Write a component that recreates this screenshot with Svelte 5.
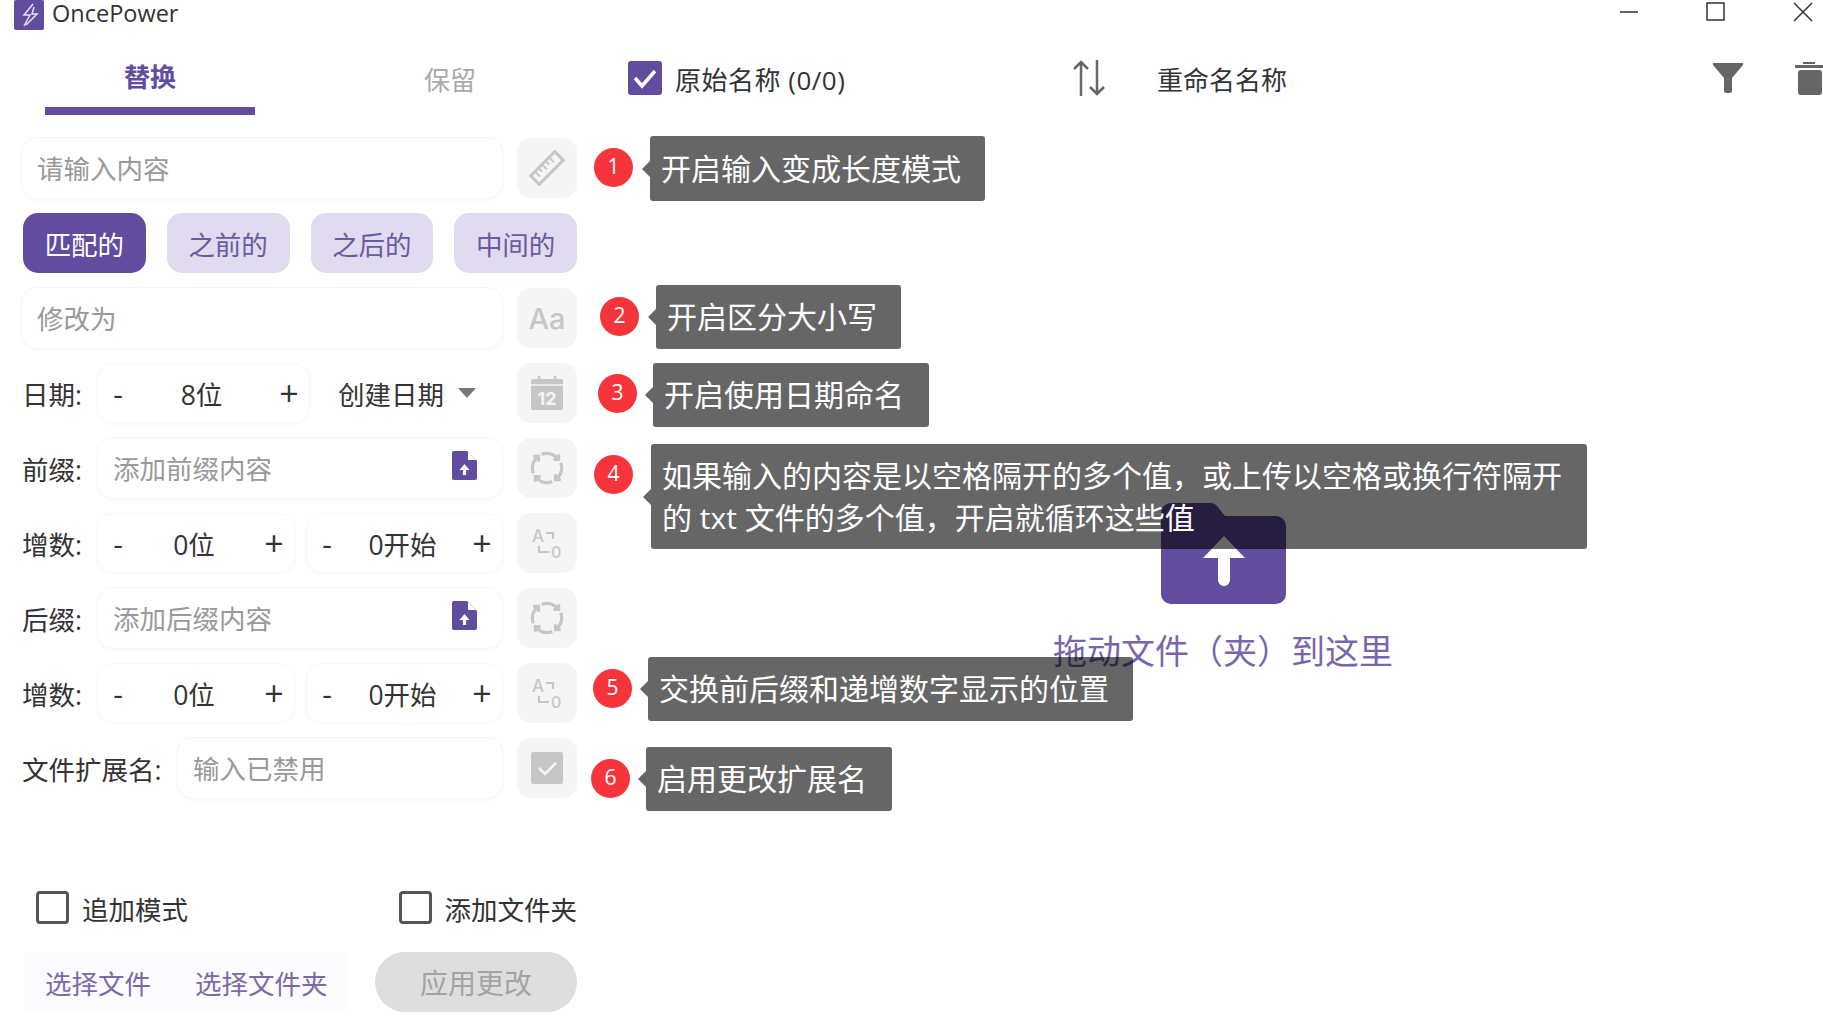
<script>
  const modes = ['匹配的', '之前的', '之后的', '中间的'];

  // annotation callouts laid over the screenshot
  const notes = [
    { n: 1, cx: 594, cy: 148, x: 650, y: 136, w: 335, h: 65, text: '开启输入变成长度模式' },
    { n: 2, cx: 600, cy: 297, x: 656, y: 285, w: 245, h: 64, text: '开启区分大小写' },
    { n: 3, cx: 598, cy: 374, x: 653, y: 363, w: 276, h: 64, text: '开启使用日期命名' },
    { n: 4, cx: 594, cy: 455, x: 651, y: 444, w: 936, h: 105, text: '如果输入的内容是以空格隔开的多个值，或上传以空格或换行符隔开的 txt 文件的多个值，开启就循环这些值' },
    { n: 5, cx: 593, cy: 669, x: 648, y: 657, w: 485, h: 64, text: '交换前后缀和递增数字显示的位置' },
    { n: 6, cx: 591, cy: 759, x: 646, y: 747, w: 246, h: 64, text: '启用更改扩展名' }
  ];
</script>

{#snippet stepper(value, cls)}
  <div class="stepper {cls}">
    <span class="step">-</span>
    <span class="value">{value}</span>
    <span class="step plus">+</span>
  </div>
{/snippet}

{#snippet loopIcon()}
  <svg width="36" height="36" viewBox="0 0 34 34" fill="none" stroke="#c6c6c6" stroke-width="3">
    <path d="M12 4C18 2 24 4 28 9M28 4v5h-5" />
    <path d="M30 12C32 18 30 24 25 28M30 28h-5v-5" />
    <path d="M22 30C16 32 10 30 6 25M6 30v-5h5" />
    <path d="M4 22C2 16 4 10 9 6M4 6h5v5" />
  </svg>
{/snippet}

{#snippet swapIcon()}
  <svg width="34" height="34" viewBox="0 0 34 34" fill="none" stroke="#c6c6c6" stroke-width="2.200">
    <text x="2" y="16" class="swap-a">A</text>
    <path d="M16 7h7v6" />
    <path d="M9 20v6h10" />
    <text x="21" y="32" class="swap-0">0</text>
  </svg>
{/snippet}

{#snippet fileIcon()}
  <svg class="file-icon" width="25" height="29" viewBox="0 0 25 29">
    <path d="M2 0h13l10 10v17a2 2 0 0 1-2 2H2a2 2 0 0 1-2-2V2a2 2 0 0 1 2-2z" fill="#614c9f" />
    <path d="M16 1l8 8h-8z" fill="#fff" />
    <path d="M12.500 13l5 6h-3.400v5h-3.200v-5H7.500z" fill="#fff" />
  </svg>
{/snippet}

<div class="window">
  <header class="titlebar">
    <div class="logo">
      <svg width="30" height="30" viewBox="0 0 30 30">
        <rect width="30" height="30" rx="2" fill="#614c9f" />
        <path d="M19 4L10 15h6l-6 11M20 7l-2 7h5L12 25" fill="none" stroke="#e6e0f5" stroke-width="1.500" />
      </svg>
    </div>
    <span class="app-name">OncePower</span>
    <div class="win-controls">
      <svg width="20" height="20" viewBox="0 0 20 20"><path d="M1 10h18" stroke="#333" stroke-width="1.500" /></svg>
      <svg width="20" height="20" viewBox="0 0 20 20"><rect x="1" y="1" width="17" height="17" fill="none" stroke="#333" stroke-width="1.500" /></svg>
      <svg width="20" height="20" viewBox="0 0 20 20"><path d="M1 1l18 18M19 1L1 19" stroke="#333" stroke-width="1.500" /></svg>
    </div>
  </header>

  <div class="body">
    <aside class="left">
      <nav class="tabs">
        <div class="tab active">替换</div>
        <div class="tab">保留</div>
      </nav>

      <div class="rows">
        <div class="row">
          <input class="field grow" placeholder="请输入内容" />
          <div class="icon-btn">
            <svg width="40" height="40" viewBox="0 0 40 40" fill="none" stroke="#c6c6c6" stroke-width="3">
              <g transform="rotate(-45 20 20)">
                <rect x="3" y="14" width="34" height="12" />
                <path d="M9 15v6M14 15v4M19 15v6M24 15v4M29 15v6" stroke-width="2" />
              </g>
            </svg>
          </div>
        </div>

        <div class="row modes">
          {#each modes as mode, i}
            <button class="mode" class:on={i === 0}>{mode}</button>
          {/each}
        </div>

        <div class="row">
          <input class="field grow" placeholder="修改为" />
          <div class="icon-btn"><span class="aa">Aa</span></div>
        </div>

        <div class="row">
          <span class="label">日期:</span>
          {@render stepper('8位', 'wide')}
          <div class="select">创建日期<span class="caret"></span></div>
          <div class="icon-btn">
            <svg width="32" height="34" viewBox="0 0 32 34">
              <path d="M8 0v6M24 0v6" stroke="#c6c6c6" stroke-width="2.500" />
              <rect y="3" width="32" height="31" rx="2" fill="#c6c6c6" />
              <path d="M0 9h32" stroke="#f5f5f5" stroke-width="1.500" />
              <text x="16" y="29" class="cal-text">12</text>
            </svg>
          </div>
        </div>

        <div class="row">
          <span class="label">前缀:</span>
          <div class="field grow with-icon">
            <input placeholder="添加前缀内容" />
            {@render fileIcon()}
          </div>
          <div class="icon-btn">{@render loopIcon()}</div>
        </div>

        <div class="row">
          <span class="label">增数:</span>
          {@render stepper('0位', 'half')}
          {@render stepper('0开始', 'half')}
          <div class="icon-btn">{@render swapIcon()}</div>
        </div>

        <div class="row">
          <span class="label">后缀:</span>
          <div class="field grow with-icon">
            <input placeholder="添加后缀内容" />
            {@render fileIcon()}
          </div>
          <div class="icon-btn">{@render loopIcon()}</div>
        </div>

        <div class="row">
          <span class="label">增数:</span>
          {@render stepper('0位', 'half')}
          {@render stepper('0开始', 'half')}
          <div class="icon-btn">{@render swapIcon()}</div>
        </div>

        <div class="row">
          <span class="label ext">文件扩展名:</span>
          <input class="field grow" placeholder="输入已禁用" />
          <div class="icon-btn">
            <svg width="32" height="32" viewBox="0 0 32 32">
              <rect width="32" height="32" rx="2" fill="#c6c6c6" />
              <path d="M8 16l6 6 11-11" fill="none" stroke="#f5f5f5" stroke-width="2.500" />
            </svg>
          </div>
        </div>
      </div>

      <div class="checks">
        <label class="check first"><span class="box"></span><span class="check-text">追加模式</span></label>
        <label class="check"><span class="box"></span><span class="check-text">添加文件夹</span></label>
      </div>

      <div class="actions">
        <div class="pickers">
          <span>选择文件</span>
          <span>选择文件夹</span>
        </div>
        <button class="apply">应用更改</button>
      </div>
    </aside>

    <main class="right">
      <div class="list-head">
        <span class="head-check">
          <svg width="34" height="34" viewBox="0 0 34 34">
            <rect width="34" height="34" rx="3" fill="#614c9f" />
            <path d="M7 17l7 8 13-15" fill="none" stroke="#fff" stroke-width="3.500" />
          </svg>
        </span>
        <span class="orig">原始名称 (0/0)</span>
        <svg class="sort" width="36" height="36" viewBox="0 0 36 36" fill="none" stroke="#666" stroke-width="2.500">
          <path d="M10 36V2M3 9l7-7 7 7" />
          <path d="M26 0v34M19 27l7 7 7-7" />
        </svg>
        <span class="renamed">重命名名称</span>
        <svg class="filter" width="30" height="30" viewBox="0 0 30 30">
          <path d="M1 0h28a1 1 0 0 1 1 2L19 15v13a2 2 0 0 1-2 2h-4a2 2 0 0 1-2-2V15L0 2a1 1 0 0 1 1-2z" fill="#666" />
        </svg>
        <svg class="trash" width="28" height="34" viewBox="0 0 28 34">
          <path d="M0 4h28v3H0zM8 1h12v2H8z" fill="#666" />
          <rect x="3" y="9" width="24" height="25" rx="3" fill="#666" />
        </svg>
      </div>

      <div class="drop">
        <svg width="125" height="101" viewBox="0 0 125 101">
          <path d="M10 0h40a8 8 0 0 1 6 3l8 10h51a10 10 0 0 1 10 10v68a10 10 0 0 1-10 10H10a10 10 0 0 1-10-10V10A10 10 0 0 1 10 0z" fill="#614c9f" />
          <path d="M63 33l21 22H69v22a6 6 0 0 1-12 0V55H42z" fill="#fff" />
        </svg>
        <p>拖动文件（夹）到这里</p>
      </div>
    </main>
  </div>

  {#each notes as note}
    <div class="badge" style="left:{note.cx}px;top:{note.cy}px">{note.n}</div>
    <div class="tip" style="left:{note.x}px;top:{note.y}px;width:{note.w}px;height:{note.h}px">{note.text}</div>
  {/each}
</div>

<style>
  :global(body) {
    margin: 0;
    background: #fff;
    overflow: hidden;
  }
  .window {
    position: relative;
    width: 1823px;
    height: 1025px;
    overflow: hidden;
    background: #fff;
    color: #333;
    font-family: "Open Sans", "Noto Sans CJK SC", sans-serif;
    font-size: 26.5px;
  }
  .titlebar {
    display: flex;
    align-items: flex-start;
    height: 30px;
    padding-left: 14px;
  }
  .logo {
    display: flex;
    width: 30px;
    height: 30px;
  }
  .app-name {
    margin-left: 8px;
    font-size: 23.5px;
    line-height: 27px;
  }
  .win-controls {
    margin-left: auto;
    display: flex;
    gap: 67px;
    padding-right: 10px;
    margin-top: 2px;
  }
  .body {
    display: flex;
  }

  .left {
    width: 556px;
    margin-left: 21px;
    flex-shrink: 0;
  }
  .tabs {
    display: flex;
    gap: 90px;
    height: 85px;
    padding-left: 24px;
    margin-bottom: 23px;
    align-items: flex-end;
  }
  .tab {
    width: 210px;
    height: 58px;
    line-height: 46px;
    text-align: center;
    font-size: 26px;
    color: #aaa;
  }
  .tab.active {
    line-height: 40px;
    color: #614c9f;
    font-weight: 700;
    border-bottom: 8px solid #614c9f;
    box-sizing: border-box;
  }

  .rows {
    display: flex;
    flex-direction: column;
    gap: 15px;
  }
  .row {
    display: flex;
    align-items: center;
    height: 60px;
  }
  .label {
    width: 76px;
    flex-shrink: 0;
    padding-left: 1px;
    box-sizing: border-box;
    white-space: nowrap;
  }
  .label.ext {
    width: 156px;
  }
  .field {
    box-sizing: border-box;
    height: 62px;
    border: 1px solid #f6f6f6;
    border-radius: 16px;
    box-shadow: 0 2px 5px rgba(0, 0, 0, 0.025);
    background: #fff;
    font: inherit;
    padding: 2px 14px 0 15px;
    outline: none;
    min-width: 0;
  }
  .field.grow {
    flex: 1;
    margin-right: 14px;
  }
  input::placeholder {
    color: #999;
    opacity: 1;
  }
  .with-icon {
    display: flex;
    align-items: center;
  }
  .with-icon input {
    flex: 1;
    min-width: 0;
    border: 0;
    outline: none;
    font: inherit;
    padding: 0;
    background: none;
  }
  .file-icon {
    margin-right: 11px;
    margin-top: -8px;
    flex-shrink: 0;
  }
  .icon-btn {
    display: flex;
    align-items: center;
    justify-content: center;
    width: 60px;
    height: 60px;
    flex-shrink: 0;
    border-radius: 14px;
    background: #f5f5f5;
  }
  .aa {
    color: #c6c6c6;
    font-size: 29px;
    font-family: "Inter", sans-serif;
    font-weight: 500;
  }
  .swap-a,
  .swap-0 {
    font-family: "Inter", sans-serif;
    font-weight: 500;
    fill: #c6c6c6;
    stroke: none;
  }
  .swap-a {
    font-size: 17px;
  }
  .swap-0 {
    font-size: 16px;
  }
  .cal-text {
    font-family: "Inter", sans-serif;
    font-size: 18px;
    font-weight: 700;
    fill: #f5f5f5;
    text-anchor: middle;
  }

  .modes {
    gap: 21px;
    padding-left: 2px;
  }
  .mode {
    width: 123px;
    height: 60px;
    border: 0;
    border-radius: 15px;
    padding: 0;
    background: #e0dbee;
    color: #6a5a9f;
    font: inherit;
  }
  .mode.on {
    background: #614c9f;
    color: #fff;
  }

  .stepper {
    box-sizing: border-box;
    display: flex;
    align-items: center;
    height: 60px;
    border-radius: 16px;
    border: 1px solid #f7f7f7;
    box-shadow: 0 2px 5px rgba(0, 0, 0, 0.025);
    flex-shrink: 0;
  }
  .stepper.wide {
    width: 213px;
  }
  .stepper.half {
    width: 198px;
  }
  .stepper.half + .stepper.half {
    margin-left: 11px;
    margin-right: 14px;
    width: 197px;
  }
  .step {
    width: 40px;
    text-align: center;
    font-size: 30px;
    flex-shrink: 0;
  }
  .step.plus {
    font-size: 34px;
  }
  .value {
    flex: 1;
    text-align: center;
    padding-right: 4px;
  }
  .select {
    flex: 1;
    display: flex;
    align-items: center;
    padding-left: 28px;
  }
  .caret {
    margin-left: 14px;
    width: 0;
    height: 0;
    border-left: 9px solid transparent;
    border-right: 9px solid transparent;
    border-top: 10px solid #777;
  }

  .checks {
    display: flex;
    margin-top: 93px;
    height: 33px;
    align-items: center;
  }
  .check {
    display: flex;
    align-items: center;
    gap: 13px;
    white-space: nowrap;
  }
  .check.first {
    width: 363px;
    padding-left: 15px;
  }
  .check-text {
    padding-top: 2px;
  }
  .box {
    box-sizing: border-box;
    width: 33px;
    height: 33px;
    border: 3.500px solid #555;
    border-radius: 4px;
  }

  .actions {
    display: flex;
    justify-content: space-between;
    align-items: center;
    margin-top: 28px;
  }
  .pickers {
    display: flex;
    gap: 44px;
    height: 60px;
    align-items: center;
    width: 325px;
    box-sizing: border-box;
    padding-left: 22px;
    margin-left: 2px;
    background: #fcfbfd;
    color: #7a6aab;
  }
  .apply {
    width: 202px;
    height: 60px;
    border: 0;
    border-radius: 30px;
    background: #dedede;
    color: #a3a3a3;
    font: inherit;
    font-size: 28px;
  }

  .right {
    flex: 1;
    margin-left: 51px;
    min-width: 0;
  }
  .list-head {
    display: flex;
    align-items: center;
    height: 34px;
    margin-top: 31px;
    font-size: 26px;
  }
  .head-check {
    display: flex;
    width: 34px;
  }
  .orig {
    margin-left: 13px;
    width: 396px;
    padding-top: 2px;
    letter-spacing: 0.5px;
    white-space: nowrap;
  }
  .sort {
    flex-shrink: 0;
  }
  .renamed {
    margin-left: 50px;
    width: 556px;
    padding-top: 2px;
  }
  .filter {
    flex-shrink: 0;
  }
  .trash {
    flex-shrink: 0;
    margin-left: 52px;
  }
  .drop {
    display: flex;
    flex-direction: column;
    align-items: center;
    padding-top: 408px;
    padding-right: 5px;
    color: #614c9f;
  }
  .drop p {
    margin: 24px 0 0;
    font-size: 34px;
    line-height: 46px;
    opacity: 0.85;
  }

  .badge {
    position: absolute;
    width: 39px;
    height: 39px;
    border-radius: 50%;
    background: #f5353b;
    color: #fff;
    font-size: 21px;
    line-height: 37px;
    text-align: center;
  }
  .tip {
    position: absolute;
    box-sizing: border-box;
    display: flex;
    align-items: center;
    padding: 0 11px;
    border-radius: 3px;
    background: rgba(0, 0, 0, 0.6);
    color: #fff;
    font-size: 30px;
    line-height: 42px;
  }
  .tip::before {
    content: '';
    position: absolute;
    left: -8px;
    top: 50%;
    margin-top: -8px;
    border-top: 8px solid transparent;
    border-bottom: 8px solid transparent;
    border-right: 8px solid rgba(0, 0, 0, 0.6);
  }
</style>
